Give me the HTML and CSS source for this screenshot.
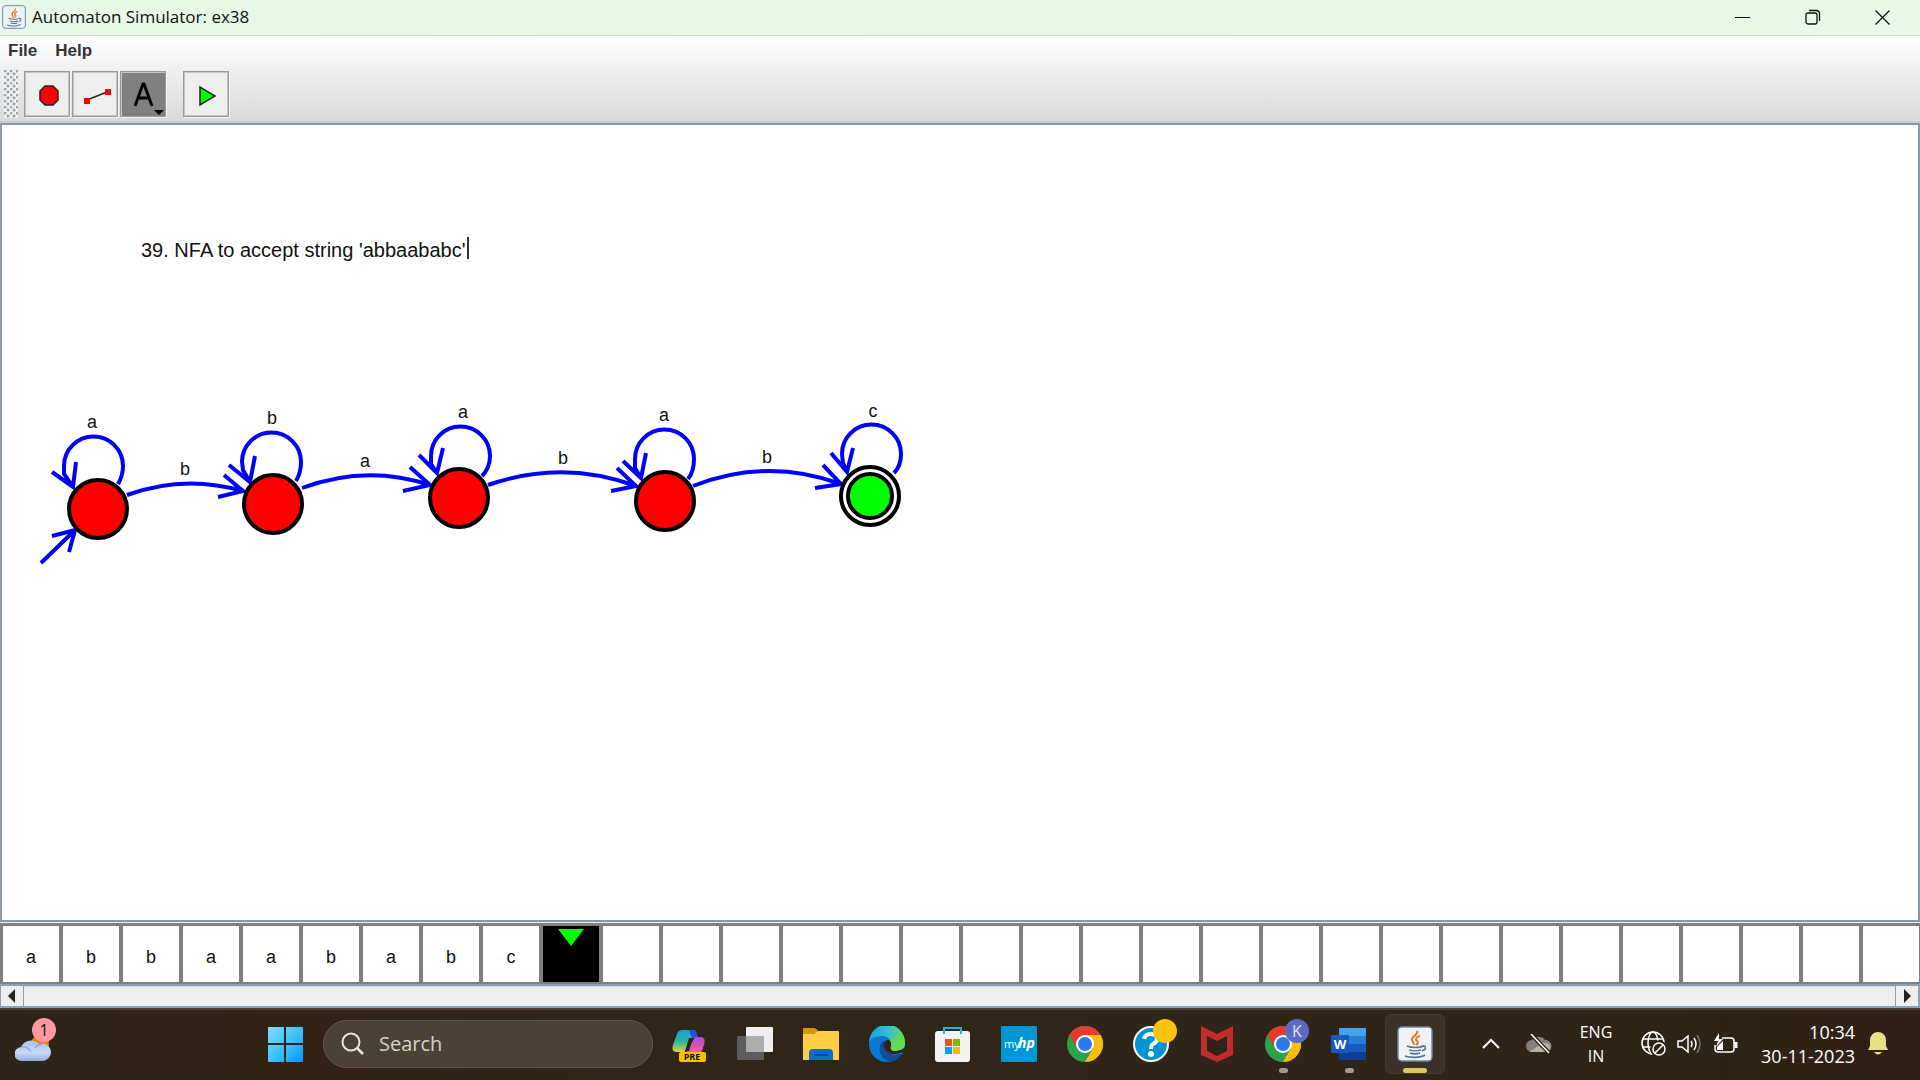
FILE: index.html
```html
<!DOCTYPE html>
<html lang="en">
<head>
<meta charset="utf-8">
<title>Automaton Simulator: ex38</title>
<link rel="stylesheet" href="styles.css">
</head>
<body>
<svg class="defs" width="0" height="0" aria-hidden="true">
  <defs>
    <symbol id="java" viewBox="0 0 36 36">
      <rect x="1" y="1" width="34" height="34" rx="4" fill="#f1f2f3" stroke="#6a8ba8" stroke-width="1.5"/>
      <path d="M20 5c2 4-6 5-5 9 .5 2 2 3 2 5M23 10c-4 1-5 3-3 5s0 3-1 4" fill="none" stroke="#e8792b" stroke-width="2"/>
      <path d="M10 20c4 2 13 2 16 0M12 24c3 1 9 1 12 0M13 27c3 1 7 1 10 0M8 30c4 2 16 2 20-1M25 20c5-1 4 4 0 5" fill="none" stroke="#4d7897" stroke-width="1.6"/>
    </symbol>
    <symbol id="chrome" viewBox="0 0 36 36">
      <circle cx="18" cy="18" r="18" fill="#2da14c"/>
      <path d="M18 9H33.600A18 18 0 0 1 18 36L25.800 22.500Z" fill="#fbbc0e"/>
      <path d="M2.400 9A18 18 0 0 1 33.600 9H18L10.200 22.500Z" fill="#e33b2e"/>
      <circle cx="18" cy="18" r="9" fill="#fff"/>
      <circle cx="18" cy="18" r="7" fill="#2b7bea"/>
    </symbol>
  </defs>
</svg>

<main class="window">
  <header class="titlebar">
    <svg class="app-icon" viewBox="0 0 36 36"><use href="#java"/></svg>
    <h1 class="title">Automaton Simulator: ex38</h1>
    <div class="caption">
      <button class="caption-button" aria-label="Minimize"><svg width="16" height="16"><path d="M0 8.500H15" stroke="#111"/></svg></button>
      <button class="caption-button" aria-label="Restore"><svg width="16" height="16" fill="none" stroke="#111" stroke-width="1.300"><rect x="1" y="4" width="11" height="11" rx="2"/><path d="M4 1.500H11Q14.500 1.500 14.500 5V12"/></svg></button>
      <button class="caption-button" aria-label="Close"><svg width="16" height="16"><path d="M.5 1.500L14.500 15.500M14.500 1.500L.5 15.500" stroke="#111" stroke-width="1.300"/></svg></button>
    </div>
  </header>

  <div class="bars">
    <nav class="menubar">
      <button class="menu">File</button>
      <button class="menu">Help</button>
    </nav>
    <div class="toolbar">
      <span class="grip"></span>
      <button class="tool" aria-label="State tool"><svg width="45" height="45"><path d="M20 14H28L33 19V28L28 33H20L15 28V19Z" fill="red" stroke="#222" stroke-width="1.500"/></svg></button>
      <button class="tool" aria-label="Transition tool"><svg width="45" height="45"><path d="M14 28L34 20" stroke="#222" stroke-width="1.500"/><path d="M11 26h6v6h-6zM32 17h6v6h-6z" fill="red"/></svg></button>
      <button class="tool pressed" aria-label="Text tool"><svg width="45" height="45"><path d="M14 34L22 12H23L31 34M17 26H28" fill="none" stroke="#000" stroke-width="2.800"/><path d="M33 38h10l-5 5z" fill="#000"/></svg></button>
      <button class="tool run" aria-label="Run"><svg width="45" height="45"><path d="M16 15V33L31 24Z" fill="#0f0" stroke="#222" stroke-width="1.500"/></svg></button>
    </div>
  </div>

  <section class="canvas" aria-label="Automaton">
    <svg class="diagram">
      <g transform="translate(-2 -126)">
        <g class="edge">
          <path d="M41 564L75 531M52 537L75 531L69 553"/>
          <path d="M118 485C121 480 123 474 123 467A29.500 29.500 0 1 0 64 467V475L73 488M52 473L73 488L76 463"/>
          <path d="M296 482C299 477 301 470 301 463A29.500 29.500 0 1 0 242 463L243 471L250 483M229 466L250 483L255 457"/>
          <path d="M482 477C487 472 490 465 490 457A29.500 29.500 0 0 0 431 457V465L437 474M419 456L437 474L443 449"/>
          <path d="M688 480C692 475 694 468 694 460A29.500 29.500 0 0 0 635 460V469L641 479M623 462L641 479L646 454"/>
          <path d="M894 474C899 469 901 462 901 455A29.500 29.500 0 1 0 842 455L843 464L847 473M831 454L847 473L853 449"/>
          <path d="M127 496Q184 475 243 492M224 476L243 492L218 498"/>
          <path d="M302 489Q366 465 430 486M410 468L430 486L403 492"/>
          <path d="M488 486Q562 460 636 487M617 469L636 487L611 492"/>
          <path d="M693 487Q767 458 841 485M823 466L841 485L815 489"/>
        </g>
        <g class="state">
          <circle cx="98" cy="510" r="29"/>
          <circle cx="273" cy="505" r="29"/>
          <circle cx="459" cy="499" r="29"/>
          <circle cx="665" cy="502" r="29"/>
          <circle class="ring" cx="870" cy="497" r="29"/>
          <circle class="final" cx="870" cy="497" r="22"/>
        </g>
        <g class="symbol">
          <text x="92" y="429">a</text><text x="272" y="425">b</text><text x="463" y="419">a</text>
          <text x="664" y="422">a</text><text x="873" y="418">c</text><text x="185" y="476">b</text>
          <text x="365" y="468">a</text><text x="563" y="465">b</text><text x="767" y="464">b</text>
        </g>
      </g>
    </svg>
    <input class="note" aria-label="Note" value="39. NFA to accept string 'abbaababc'">
  </section>

  <ol class="tape">
    <li>a</li><li>b</li><li>b</li><li>a</li><li>a</li><li>b</li><li>a</li><li>b</li><li>c</li>
    <li class="head"><svg width="26" height="17"><path d="M0 0H26L13 17Z" fill="#0f0"/></svg></li>
    <li></li><li></li><li></li><li></li><li></li><li></li><li></li><li></li><li></li><li></li><li></li>
    <li></li><li></li><li></li><li></li><li></li><li></li><li></li><li></li><li></li><li></li><li></li>
  </ol>
  <div class="scrollbar">
    <button class="scroll-button" aria-label="Scroll left"><svg width="8" height="14"><path d="M7 0V14L0 7Z" fill="#222"/></svg></button>
    <div class="track"></div>
    <button class="scroll-button" aria-label="Scroll right"><svg width="8" height="14"><path d="M1 0V14L8 7Z" fill="#222"/></svg></button>
  </div>
</main>

<footer class="taskbar">
  <div class="widgets">
    <button class="task" aria-label="Weather">
      <svg width="36" height="36"><defs><linearGradient id="cl" x2="0" y2="1"><stop stop-color="#a9c5f5"/><stop offset=".6" stop-color="#c8daf8"/><stop offset="1" stop-color="#8eabe0"/></linearGradient></defs>
        <circle cx="25" cy="18" r="9" fill="#f57c12"/><path d="M7 35A7 7 0 0 1 6 21A11 11 0 0 1 24 18A9 9 0 0 1 36 26A9 9 0 0 1 28 35Z" fill="url(#cl)"/><path d="M6 21q7-1 10 5M20 22q3-4 8-4" fill="none" stroke="#7999db" stroke-width="1.500" opacity=".7"/></svg>
      <span class="badge alert">1</span>
    </button>
  </div>
  <button class="task" aria-label="Start"><svg width="36" height="36"><defs><linearGradient id="win" gradientUnits="userSpaceOnUse" x1="0" y1="0" x2="36" y2="36"><stop stop-color="#85dcff"/><stop offset=".5" stop-color="#42c4ff"/><stop offset="1" stop-color="#0895ff"/></linearGradient></defs><path d="M1 2q0-1 1-1H17V17H1ZM19 1H35q1 0 1 1V17H19ZM1 19H17V36H2q-1 0-1-1ZM19 19H36V35q0 1-1 1H19Z" fill="url(#win)"/></svg></button>
  <label class="search"><svg width="24" height="24" fill="none" stroke="#e8e6e4" stroke-width="2"><circle cx="10" cy="10" r="8.500"/><path d="M16 16L22 22" stroke-width="2.500"/></svg><input type="search" placeholder="Search" aria-label="Search"></label>

  <div class="apps">
    <button class="task" aria-label="Copilot"><svg width="36" height="36"><defs><linearGradient id="c1" x2="0" y2="1"><stop stop-color="#1b9bea"/><stop offset=".5" stop-color="#26b5a8"/><stop offset="1" stop-color="#e8d03a"/></linearGradient><linearGradient id="c2" x2="0" y2="1"><stop stop-color="#a44bea"/><stop offset="1" stop-color="#ff5f7c"/></linearGradient></defs>
      <path d="M12 4H22Q25 4 26 9L27 12H23Q19 12 18 15L15 24Q14 27 10 26H5Q0 25 2 19L6 8Q7 4 12 4Z" fill="url(#c1)"/><path d="M18 4h4q3 0 4 5l1 3h-6Z" fill="#1f50d4"/><path d="M24 11H31Q35 12 33 19L30 27H15Z" fill="url(#c2)"/><path d="M18 12L14 25H18L22 12Z" fill="#302318"/>
      <rect x="8" y="26" width="27" height="10" rx="2" fill="#fac000"/><text x="21" y="34" class="pre">PRE</text></svg></button>
    <button class="task" aria-label="Task view"><svg width="36" height="36"><rect x="9" y="1" width="27" height="25" rx="1" fill="#efefef"/><rect y="10" width="27" height="24" rx="1" fill="#5d5d5d"/><path d="M9 10H27V26H9Z" fill="#adadad"/></svg></button>
    <button class="task" aria-label="File Explorer"><svg width="36" height="36"><path d="M0 3q0-1 1-1H11q2 0 4 3V14H0Z" fill="#db9700"/><path d="M0 8H11L15 5H35q1 0 1 1V34H0Z" fill="#ffce43"/><path d="M6 34V27q0-4 4-4H26q4 0 4 4V34Z" fill="#0a6fc4"/><path d="M11 29H25" stroke="#064a91" stroke-width="2"/></svg></button>
    <button class="task" aria-label="Edge"><svg width="36" height="36"><defs><linearGradient id="e1"><stop stop-color="#1b9ce2"/><stop offset=".55" stop-color="#35c1cf"/><stop offset="1" stop-color="#64dd4e"/></linearGradient></defs><circle cx="18" cy="18" r="18" fill="#0b78d4"/><path d="M0 16A18 18 0 0 1 36 17C36 23 31 25 26 25C22 25 20 23 22 20C24 16 20 10 13 10Q3 10 0 16Z" fill="url(#e1)"/><path d="M16 14C9 17 8 29 18 35C24 36 30 33 34 27C28 30 19 29 16 23Q14 18 16 14Z" fill="#0d4d9c"/><path d="M18 14C12 17 15 27 24 28Q30 28 34 26L36 22Q28 26 23 23C21 22 24 16 20 14Z" fill="#302318"/><path d="M36 17C36 23 31 25 26 25C22 25 21 23 22 20Q23 17 21 14L32 10Z" fill="#63d957"/></svg></button>
    <button class="task" aria-label="Store"><svg width="36" height="36"><rect y="5" width="35" height="31" rx="3" fill="#f3f3f3"/><path d="M9 8V2H26V8" fill="none" stroke="#29aee6" stroke-width="2"/><path d="M10 13h7v7h-7z" fill="#f25022"/><path d="M18 13h7v7h-7z" fill="#7fba00"/><path d="M10 21h7v7h-7z" fill="#00a4ef"/><path d="M18 21h7v7h-7z" fill="#ffb900"/></svg></button>
    <button class="task" aria-label="myHP"><svg width="36" height="36"><rect width="36" height="36" rx="1" fill="#0096d6"/><text x="3" y="22" class="my">my</text><text x="17" y="22" class="hp">hp</text></svg></button>
    <button class="task" aria-label="Chrome"><svg width="36" height="36"><use href="#chrome"/></svg></button>
    <button class="task" aria-label="HP Support"><svg width="36" height="36"><circle cx="18" cy="18" r="17" fill="#0096d6" stroke="#fff" stroke-width="2"/><path d="M11 13Q12 8 18 8Q24 8 24 13Q24 16 20 18Q18 19 18 23" fill="none" stroke="#fff" stroke-width="4"/><circle cx="18" cy="28" r="3" fill="#fff"/></svg><span class="badge"></span></button>
    <button class="task" aria-label="McAfee"><svg width="36" height="36"><path d="M2 0L18 8L34 0V29L18 36L2 29Z" fill="#c22b2c"/><path d="M8 10L18 15L28 10V25L18 30L8 25Z" fill="#302318"/></svg></button>
    <button class="task open" aria-label="Chrome, K"><svg width="36" height="36"><use href="#chrome"/></svg><span class="badge profile">K</span></button>
    <button class="task open" aria-label="Word"><svg width="36" height="36"><path d="M8 3q0-1 1-1H34q1 0 1 1V10H8Z" fill="#41a5ee"/><path d="M8 10H35V18H8Z" fill="#2b7cd3"/><path d="M8 18H35V26H8Z" fill="#185abd"/><path d="M8 26H35V33q0 1-1 1H9q-1 0-1-1Z" fill="#103f91"/><rect y="9" width="18" height="18" rx="1" fill="#185abd"/><text x="9" y="23" class="word">W</text></svg></button>
    <button class="task active" aria-label="Automaton Simulator"><svg width="36" height="36"><use href="#java"/></svg></button>
  </div>

  <div class="tray">
    <button class="tray-button chevron" aria-label="Show hidden icons"><svg width="18" height="12"><path d="M1 10L9 2L17 10" fill="none" stroke="#fff" stroke-width="2"/></svg></button>
    <button class="tray-button cloud" aria-label="OneDrive"><svg width="26" height="20"><path d="M6 18A6 6 0 0 1 6 6A8 8 0 0 1 19 6A6 6 0 0 1 20 18Z" fill="#85807a"/><path d="M3 18L17 9Q25 8 24 15Q23 18 20 18Z" fill="#b4b0ac"/><path d="M5 0L23 19" stroke="#302318" stroke-width="4"/><path d="M5 0L23 19" stroke="#fff" stroke-width="1.500"/></svg></button>
    <button class="tray-button language">ENG<br>IN</button>
    <button class="tray-button status" aria-label="Network, volume, battery">
      <svg width="26" height="26" fill="none" stroke="#fff" stroke-width="1.500"><circle cx="12" cy="12" r="11"/><ellipse cx="12" cy="12" rx="5" ry="11"/><path d="M2 8H22M2 16H14"/><circle cx="18" cy="18" r="8" fill="#302318" stroke="#302318"/><circle cx="18" cy="18" r="6"/><path d="M14 22L22 14"/></svg>
      <svg width="26" height="20" fill="none" stroke="#fff" stroke-width="1.500"><path d="M1 7H5L11 2V18L5 13H1Z"/><path d="M14 7q2 3 0 6M17 4q4 6 0 12"/><path d="M20 1q6 9 0 18" stroke="#77706a"/></svg>
      <svg width="26" height="22" fill="none" stroke="#fff" stroke-width="1.500"><path d="M9 5H18q3 0 3 3V16q0 3-3 3H5q-3 0-3-3V12"/><path d="M23 9v6" stroke-width="3"/><path d="M6 0L1 8H5L3 14L10 6H6ZM4 17V14L10 8V17Z" fill="#fff" stroke="none"/></svg>
    </button>
    <button class="tray-button clock">10:34<br>30-11-2023</button>
    <button class="tray-button bell" aria-label="Notifications"><svg width="20" height="24"><path d="M0 18L2 14V8A8 8 0 0 1 18 8V14L20 18ZM6 20H14Q10 25 6 20Z" fill="#e8df86"/></svg></button>
  </div>
</footer>
</body>
</html>
```
FILE: styles.css
```css
* { box-sizing: border-box; }

body {
  margin: 0;
  height: 100vh;
  display: flex;
  flex-direction: column;
  overflow: hidden;
  font-family: "Liberation Sans", Arial, sans-serif;
  font-size: 18px;
  color: #111;
}

button {
  padding: 0;
  border: 0;
  background: none;
  font: inherit;
  color: inherit;
}

svg { display: block; flex: none; }
.defs { position: absolute; }

.window {
  flex: 1;
  min-height: 0;
  display: flex;
  flex-direction: column;
  background: #eee;
}

.titlebar {
  flex: none;
  height: 35px;
  display: flex;
  align-items: center;
  gap: 6px;
  padding: 0 2px 2px;
  background: linear-gradient(90deg, #e7f8ea, #e9f7e2 30%, #e8f7e5 60%, #eaf8ea);
}
.app-icon { width: 24px; height: 24px; }
.title {
  margin: 0;
  font-family: "Open Sans", "Noto Sans", sans-serif;
  font-size: 17px;
  line-height: 24px;
  font-weight: 400;
}
.caption { margin-left: auto; display: flex; height: 100%; }
.caption-button {
  width: 70px;
  display: flex;
  align-items: center;
  justify-content: center;
}

.bars {
  flex: none;
  height: 88px;
  background: linear-gradient(#fff, #d9d9d9);
  border-top: 1px solid #dcdcdc;
  border-bottom: 2px solid #ccc;
}
.menubar { display: flex; align-items: flex-start; gap: 18px; height: 33px; padding-left: 8px; }
.menu {
  font-size: 17px;
  line-height: 30px;
  font-weight: 700;
  color: #333;
}
.toolbar { display: flex; align-items: center; gap: 2px; height: 50px; padding-left: 4px; }
.grip {
  width: 14px;
  height: 48px;
  margin-right: 4px;
  background:
    radial-gradient(circle at 1px 1px, #9aa3ac 1px, transparent 2px) 0 0 / 6px 6px,
    radial-gradient(circle at 4px 4px, #9aa3ac 1px, transparent 2px) 0 0 / 6px 6px,
    #f4f4f4;
}
.tool {
  width: 46px;
  height: 46px;
  border: 1px solid #999;
  box-shadow: inset 0 0 0 1px #c4c4c4, 1px 1px #f4f4f4;
  background: #eee;
}
.tool.pressed { background: #808080; box-shadow: inset 1px 1px #c4c4c4, 1px 1px #f4f4f4; }
.tool.run { margin-left: 15px; }

.canvas {
  flex: 1;
  min-height: 0;
  position: relative;
  margin-bottom: 1px;
  border: 2px solid #8798a8;
  border-left-color: #8f9ba6;
  background: #fff;
  overflow: hidden;
}
.diagram { width: 100%; height: 100%; }
.edge { fill: none; stroke: #00f; stroke-width: 4; }
.state { fill: red; stroke: #000; stroke-width: 4; }
.ring { fill: #fff; }
.final { fill: #0f0; }
.symbol { font-size: 18px; text-anchor: middle; fill: #111; }
.note {
  position: absolute;
  left: 139px;
  top: 112px;
  width: 328px;
  height: 26px;
  padding: 0;
  border: 0;
  background: linear-gradient(#333, #333) right top / 2px 22px no-repeat;
  font: 20px/26px "Liberation Sans", Arial, sans-serif;
  color: #111;
}

.tape {
  flex: none;
  display: flex;
  height: 61px;
  margin: 0;
  padding: 0 0 0 1px;
  list-style: none;
  overflow: hidden;
  background: #808080;
}
.tape li {
  flex: none;
  width: 60px;
  border: solid #808080;
  border-width: 3px 2px 2px;
  background: #fff;
  text-align: center;
  line-height: 62px;
}
.tape .head { display: flex; justify-content: center; padding-top: 3px; background: #000; }

.scrollbar {
  flex: none;
  display: flex;
  height: 24px;
  border: solid #8ba0b5;
  border-width: 2px 2px 2px 1px;
  background: #eee;
}
.track { flex: 1; border: solid #8ba0b5; border-width: 0 1px; box-shadow: inset 0 1px #c8d8e8; }
.scroll-button { width: 22px; display: flex; align-items: center; justify-content: center; }

.taskbar {
  flex: none;
  height: 72px;
  display: flex;
  align-items: center;
  border-top: 2px solid #4a4036;
  padding-bottom: 2px;
  background: linear-gradient(90deg, #2d2418, #332216 15%, #302618 35%, #2f2418 75%, #2c2515 90%, #321f15);
  color: #fff;
  font-family: "Open Sans", "Noto Sans", sans-serif;
}
.widgets { width: 252px; }
.task {
  position: relative;
  width: 66px;
  height: 60px;
  display: flex;
  align-items: center;
  justify-content: center;
}
.badge {
  position: absolute;
  left: 35px;
  top: 5px;
  width: 24px;
  height: 24px;
  border-radius: 50%;
  background: #ffc20e;
  font-size: 16px;
  line-height: 24px;
}
.badge.alert { left: 32px; top: 4px; background: #ff98a0; color: #111; }
.badge.profile { background: #5c6bc0; color: #dfe3ff; }
.search {
  width: 330px;
  height: 48px;
  margin: 0 3px 0 5px;
  padding-left: 17px;
  display: flex;
  align-items: center;
  gap: 14px;
  border: 1px solid #635a4e;
  border-radius: 24px;
  background: #4b4236;
}
.search input {
  width: 240px;
  padding: 0;
  border: 0;
  background: none;
  outline: 0;
  font: 20px/28px "Open Sans", "Noto Sans", sans-serif;
  color: #fff;
}
.search input::placeholder { color: #d5d1cd; opacity: 1; }
.apps { display: flex; }
.open::after, .active::after {
  content: "";
  position: absolute;
  left: 29px;
  bottom: 1px;
  width: 9px;
  height: 5px;
  border-radius: 3px;
  background: #a09a94;
}
.active::before {
  content: "";
  position: absolute;
  inset: 0 3px;
  border: 1px solid #453b30;
  border-radius: 6px;
  background: #3b3126;
}
.active svg { position: relative; }
.active::after { left: 21px; width: 24px; background: #dcc960; }
.pre { font: 700 9px "Open Sans", sans-serif; text-anchor: middle; fill: #111; }
.my { font: 11px "Open Sans", sans-serif; fill: #fff; }
.hp { font: italic 700 14px "Open Sans", sans-serif; fill: #fff; }
.word { font: 700 13px "Open Sans", sans-serif; text-anchor: middle; fill: #fff; }

.tray {
  margin-left: auto;
  display: flex;
  align-items: center;
  padding-right: 32px;
  font-size: 16px;
  line-height: 24px;
}
.cloud { margin-left: 26px; }
.language { width: 60px; margin-left: 14px; }
.status { display: flex; align-items: center; gap: 10px; margin-left: 15px; }
.clock { width: 100px; margin-left: 16px; font-size: 18px; text-align: right; }
.bell { margin-left: 13px; }
```
